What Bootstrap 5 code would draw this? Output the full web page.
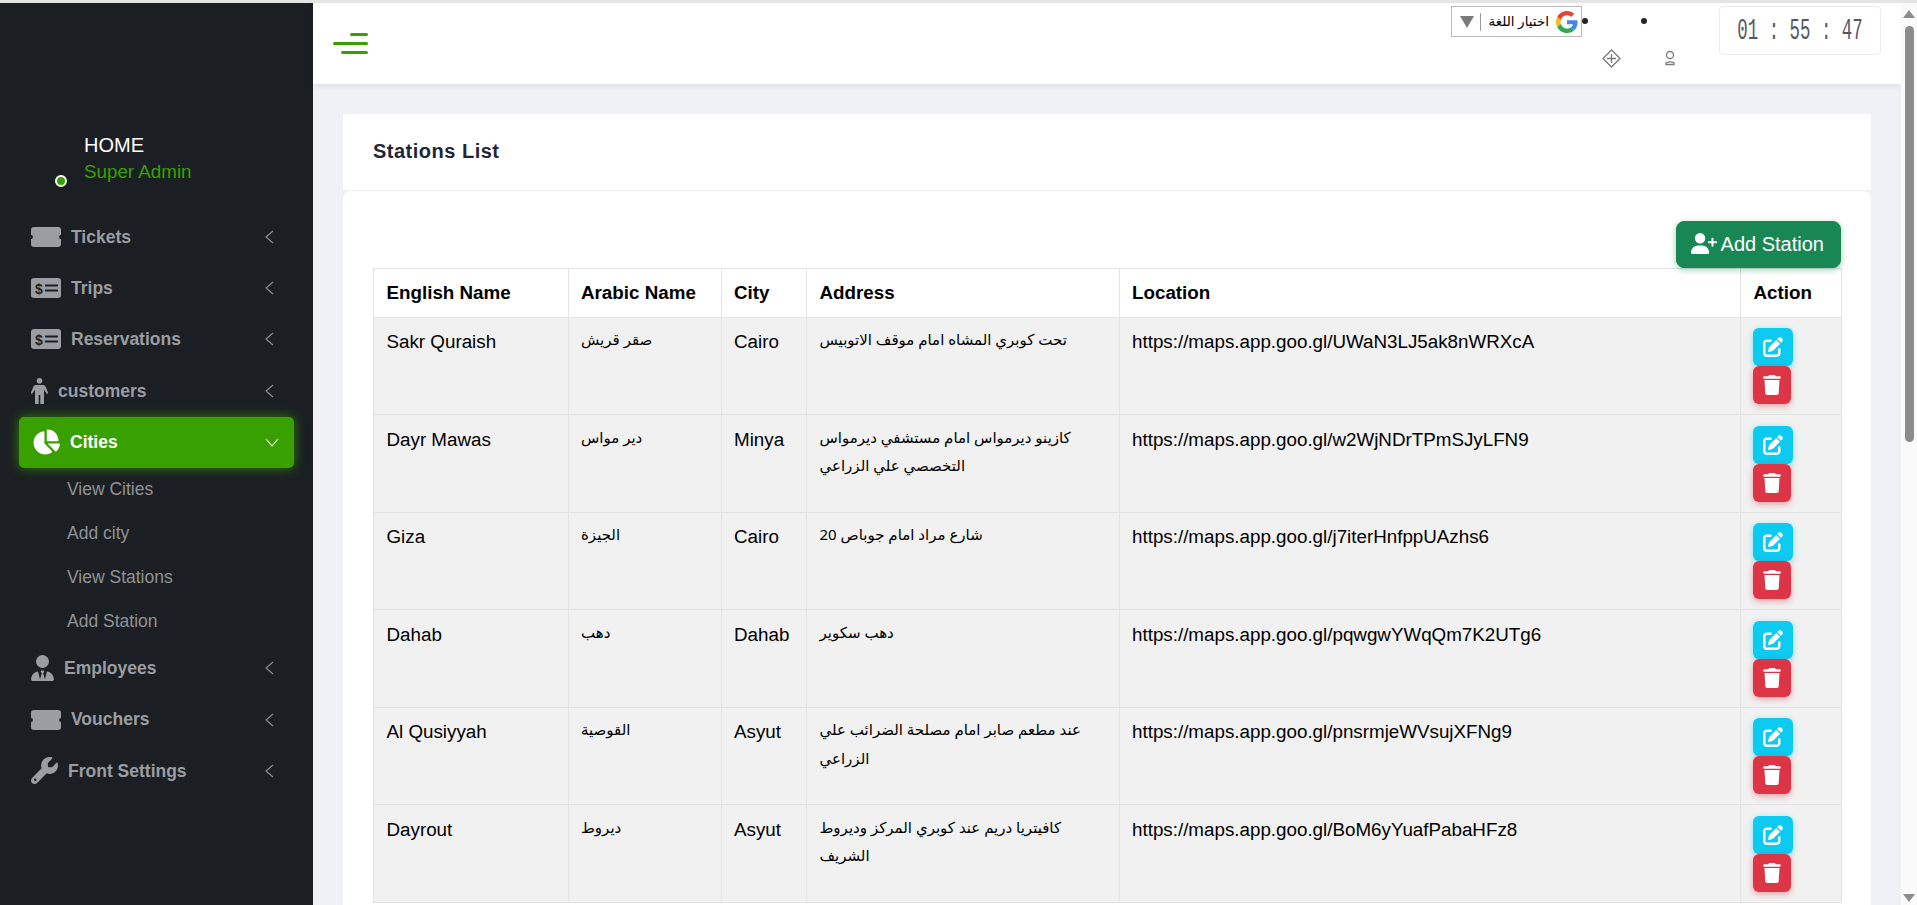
<!DOCTYPE html>
<html lang="en">
<head>
    <meta charset="UTF-8">
    <meta name="viewport" content="width=device-width, initial-scale=1.0">
    <title>Stations List</title>
    <link rel="stylesheet" href="https://cdn.jsdelivr.net/npm/bootstrap@5.3.0/dist/css/bootstrap.min.css">
    <style>
        html, body {
            height: 905px;
            overflow: hidden;
        }

        body {
            background-color: #e4e4e4;
            padding-top: 3px;
            font-family: "Liberation Sans", "DejaVu Sans", sans-serif;
            font-size: 19px;
            color: #000;
        }

        .app-shell {
            height: 902px;
            overflow: hidden;
        }

        /* sidebar */
        .side-bar {
            width: 313px;
            background-color: #1b1f23;
            flex-shrink: 0;
        }

        .side-profile {
            height: 208px;
            padding-left: 61px;
            padding-top: 129px;
        }

        .online-dot {
            width: 12px;
            height: 12px;
            border-radius: 50%;
            background-color: #38a000;
            border: 2px solid #fff;
            margin-top: 43px;
            margin-right: 17px;
            margin-left: -6px;
        }

        .side-home {
            color: #fff;
            font-size: 20px;
            line-height: 27px;
        }

        .side-role {
            color: #38a000;
            font-size: 18.8px;
            line-height: 26px;
        }

        .side-item {
            height: 51.4px;
            padding-left: 31px;
            padding-right: 39px;
            color: #9a9da1;
            font-size: 17.5px;
            font-weight: 700;
        }

        .side-item svg.side-ico {
            fill: #9a9da1;
            flex-shrink: 0;
            margin-right: 10px;
        }

        .side-item .side-label {
            flex-grow: 1;
        }

        .side-chevron {
            fill: none;
            stroke: #8d9094;
            stroke-width: 1.1;
            flex-shrink: 0;
        }

        .side-active {
            margin-left: 19px;
            margin-right: 19px;
            padding-left: 13px;
            padding-right: 15px;
            background-color: #38a000;
            color: #fff;
            border-radius: 5px;
            box-shadow: 0 0 12px rgba(56, 160, 0, 0.75);
            position: relative;
        }

        .side-active svg.side-ico {
            fill: #fff;
        }

        .side-active .side-chevron {
            stroke: #fff;
        }

        .side-sub {
            margin-top: -1px;
            margin-bottom: 0;
            padding-left: 67px;
            list-style: none;
        }

        .side-sub li {
            height: 43.9px;
            line-height: 44px;
            color: #8f9296;
            font-size: 17.5px;
        }

        /* top header */
        .top-head {
            height: 81px;
            background-color: #fff;
            box-shadow: 0 2px 6px rgba(0, 0, 0, 0.08);
            position: relative;
            z-index: 2;
        }

        .burger-btn {
            width: 35px;
            margin-left: 20px;
            margin-top: 30px;
        }

        .burger-btn span {
            display: block;
            height: 3px;
            border-radius: 2px;
            background-color: #38a000;
            margin-left: auto;
            margin-bottom: 6px;
        }

        .burger-btn .bar-a { width: 18px; }
        .burger-btn .bar-b { width: 35px; }
        .burger-btn .bar-c { width: 27px; }

        .lang-box {
            width: 131px;
            height: 31px;
            border: 1px solid #b9b9b9;
            margin-top: 3px;
            padding-left: 8px;
            padding-right: 3px;
            background-color: #fff;
        }

        .lang-arrow {
            width: 0;
            height: 0;
            border-left: 7px solid transparent;
            border-right: 7px solid transparent;
            border-top: 12px solid #7b7b7b;
        }

        .lang-sep {
            width: 1px;
            height: 18px;
            background-color: #9a9a9a;
            margin-left: 6px;
            margin-right: 6px;
        }

        .lang-text {
            font-family: "Noto Sans", "DejaVu Sans", sans-serif;
            font-size: 13.5px;
            white-space: nowrap;
            line-height: 1;
            margin-right: 7px;
        }

        .head-tools {
            width: 137px;
        }

        .tool-dot {
            position: absolute;
            top: 15px;
            width: 6px;
            height: 6px;
            border-radius: 50%;
            background-color: #23262f;
        }

        .tool-dot.dot-a { left: 0; }
        .tool-dot.dot-b { left: 59px; }

        .tool-ico {
            position: absolute;
            fill: none;
            stroke: #7a7a7a;
        }

        .tool-ico.ico-a { left: 20px; top: 46px; }
        .tool-ico.ico-b { left: 82px; top: 47px; }

        .clock-box {
            width: 162px;
            height: 49px;
            border: 1px solid #ececec;
            border-radius: 4px;
            margin-top: 3px;
            margin-right: 20px;
            overflow: hidden;
            text-align: center;
        }

        .clock-text {
            display: inline-block;
            font-family: "Liberation Mono", "DejaVu Sans Mono", monospace;
            font-size: 30px;
            line-height: 49px;
            color: #555864;
            white-space: nowrap;
            transform: scaleX(0.58);
            transform-origin: center;
            margin: 0 -40px;
        }

        /* content */
        .page-area {
            background-color: #f0f1f6;
            min-width: 0;
        }

        .page-body {
            padding: 30px 30px 0 30px;
            overflow: hidden;
        }

        .list-head {
            background-color: #fff;
            height: 76px;
            line-height: 74px;
            padding-left: 30px;
            font-size: 20px;
            font-weight: 700;
            letter-spacing: 0.5px;
            color: #212636;
            margin-bottom: 1px;
        }

        .list-card {
            background-color: #fff;
            border: 0;
            border-radius: 8px 8px 0 0;
            padding: 30px;
            height: 900px;
        }

        .add-btn {
            font-size: 20px;
            border-radius: 8px;
            padding: 7px 16px 8px 14px;
            box-shadow: 0 2px 6px rgba(25, 135, 84, 0.4);
            position: relative;
            z-index: 1;
        }

        .add-btn svg {
            fill: #fff;
            vertical-align: -3px;
            margin-right: 4px;
        }

        .add-row {
            height: 47px;
        }

        .station-table {
            table-layout: fixed;
            width: 1468px;
            margin: 0;
            font-size: 18.8px;
            line-height: 28.5px;
            --bs-table-border-color: #e3e3e3;
        }

        .station-table th,
        .station-table td {
            padding: 10.25px 12.5px;
            color: #000;
        }

        .station-table th {
            padding-top: 9.7px;
            padding-bottom: 9.7px;
        }

        .station-table tbody td {
            background-color: #f1f1f1;
        }

        .station-table tbody td:last-child {
            padding-left: 12px;
        }

        .col-en { width: 194.5px; }
        .col-ar { width: 153px; }
        .col-city { width: 85.5px; }
        .col-addr { width: 312.5px; }
        .col-loc { width: 621.5px; }
        .col-act { width: 101px; }

        .ar-text {
            font-family: "Noto Sans", "DejaVu Sans", sans-serif;
            font-size: 15px;
            line-height: 15px;
            vertical-align: 3px;
        }

        .act-btn {
            width: 38px;
            height: 38px;
            padding: 0;
            border: 0;
            border-radius: 6px;
            display: flex;
            align-items: center;
            justify-content: center;
        }

        .act-btn svg {
            fill: #fff;
        }

        .act-edit {
            width: 40px;
            background-color: #0dcaf0;
            box-shadow: 0 2px 6px rgba(13, 202, 240, 0.45);
        }

        .act-del {
            background-color: #dc3545;
            box-shadow: 0 2px 6px rgba(220, 53, 69, 0.45);
        }

        /* scrollbar */
        .fake-scroll {
            width: 16px;
            background-color: #fafafa;
            flex-shrink: 0;
            position: relative;
            z-index: 3;
        }

        .scroll-up,
        .scroll-down {
            position: absolute;
            left: 2px;
            width: 0;
            height: 0;
            border-left: 6px solid transparent;
            border-right: 6px solid transparent;
        }

        .scroll-up {
            top: 7px;
            border-bottom: 8px solid #8b8b8b;
        }

        .scroll-down {
            bottom: 3px;
            border-top: 8px solid #8b8b8b;
        }

        .scroll-thumb {
            position: absolute;
            left: 4px;
            top: 23px;
            width: 9px;
            height: 416px;
            border-radius: 5px;
            background-color: #8b8b8b;
        }
    </style>
</head>
<body>
    <div class="app-shell d-flex">

        <!-- sidebar -->
        <aside class="side-bar">
            <div class="side-profile d-flex">
                <span class="online-dot"></span>
                <div>
                    <div class="side-home">HOME</div>
                    <div class="side-role">Super Admin</div>
                </div>
            </div>

            <div class="side-item d-flex align-items-center">
                <svg class="side-ico" width="30" height="20" viewBox="0 0 30 20"><path d="M3 0h24a3 3 0 0 1 3 3v5a2 2 0 0 0 0 4v5a3 3 0 0 1-3 3H3a3 3 0 0 1-3-3v-5a2 2 0 0 0 0-4V3a3 3 0 0 1 3-3z"/></svg>
                <span class="side-label">Tickets</span>
                <svg class="side-chevron" width="9" height="14" viewBox="0 0 9 14"><path d="M8 1L1 7l7 6"/></svg>
            </div>
            <div class="side-item d-flex align-items-center">
                <svg class="side-ico" width="30" height="20" viewBox="0 0 30 20"><rect width="30" height="20" rx="3"/><text x="4" y="16" font-size="14" font-weight="700" font-family="Liberation Sans" fill="#1b1f23">$</text><rect x="14" y="6.500" width="13" height="2" fill="#1b1f23"/><rect x="14" y="11.500" width="13" height="2" fill="#1b1f23"/></svg>
                <span class="side-label">Trips</span>
                <svg class="side-chevron" width="9" height="14" viewBox="0 0 9 14"><path d="M8 1L1 7l7 6"/></svg>
            </div>
            <div class="side-item d-flex align-items-center">
                <svg class="side-ico" width="30" height="20" viewBox="0 0 30 20"><rect width="30" height="20" rx="3"/><text x="4" y="16" font-size="14" font-weight="700" font-family="Liberation Sans" fill="#1b1f23">$</text><rect x="14" y="6.500" width="13" height="2" fill="#1b1f23"/><rect x="14" y="11.500" width="13" height="2" fill="#1b1f23"/></svg>
                <span class="side-label">Reservations</span>
                <svg class="side-chevron" width="9" height="14" viewBox="0 0 9 14"><path d="M8 1L1 7l7 6"/></svg>
            </div>
            <div class="side-item d-flex align-items-center">
                <svg class="side-ico" width="17" height="26" viewBox="0 0 17 26"><circle cx="8.500" cy="2.800" r="2.800"/><path d="M5 7h7c1.200 0 2 .5 2.600 1.600L17 14.500c.4 1-1 1.700-1.600.8L13 11.500V26H9.300V17H7.700v9H4V11.500L1.600 15.300c-.6.900-2 .2-1.600-.8L2.400 8.600C3 7.500 3.800 7 5 7z"/></svg>
                <span class="side-label">customers</span>
                <svg class="side-chevron" width="9" height="14" viewBox="0 0 9 14"><path d="M8 1L1 7l7 6"/></svg>
            </div>
            <div class="side-item side-active d-flex align-items-center">
                <svg class="side-ico" width="28" height="26" viewBox="0 0 576 512"><path d="M304 240V16.600c0-9 7-16.600 16-16.600C443.700 0 544 100.300 544 224c0 9-7.600 16-16.600 16H304zM32 272C32 150.700 122.100 50.300 239 34.300c9.200-1.300 17 6.100 17 15.400V288L412.500 444.500c6.700 6.700 6.200 17.700-1.500 23.100C371.800 495.600 323.800 512 272 512C139.500 512 32 404.600 32 272zm526.400 16c9.300 0 16.600 7.800 15.400 17c-7.700 55.900-34.600 105.600-73.900 142.300c-6 5.600-15.400 5.200-21.200-.7L320 288H558.400z"/></svg>
                <span class="side-label">Cities</span>
                <svg class="side-chevron" width="14" height="9" viewBox="0 0 14 9"><path d="M1 1l6 7 6-7"/></svg>
            </div>
            <ul class="side-sub">
                <li>View Cities</li>
                <li>Add city</li>
                <li>View Stations</li>
                <li>Add Station</li>
            </ul>
            <div class="side-item d-flex align-items-center">
                <svg class="side-ico" width="23" height="26" viewBox="0 0 448 512"><path d="M96 128a128 128 0 1 0 256 0A128 128 0 1 0 96 128zm94.500 200.200l18.600 31L175.800 483.100l-36-146.900c-2-8.100-9.800-13.400-17.900-11.300C51.900 342.400 0 405.800 0 481.300c0 17 13.800 30.700 30.700 30.700H162.500c0 0 0 0 .1 0H168 280h5.500c0 0 0 0 .1 0H417.300c17 0 30.700-13.800 30.700-30.700c0-75.500-51.900-138.900-121.900-156.400c-8.100-2-15.900 3.300-17.900 11.300l-36 146.900L238.900 359.200l18.600-31c6.400-10.700-1.300-24.200-13.700-24.200H224 204.300c-12.400 0-20.100 13.600-13.700 24.200z"/></svg>
                <span class="side-label">Employees</span>
                <svg class="side-chevron" width="9" height="14" viewBox="0 0 9 14"><path d="M8 1L1 7l7 6"/></svg>
            </div>
            <div class="side-item d-flex align-items-center">
                <svg class="side-ico" width="30" height="20" viewBox="0 0 30 20"><path d="M3 0h24a3 3 0 0 1 3 3v5a2 2 0 0 0 0 4v5a3 3 0 0 1-3 3H3a3 3 0 0 1-3-3v-5a2 2 0 0 0 0-4V3a3 3 0 0 1 3-3z"/></svg>
                <span class="side-label">Vouchers</span>
                <svg class="side-chevron" width="9" height="14" viewBox="0 0 9 14"><path d="M8 1L1 7l7 6"/></svg>
            </div>
            <div class="side-item d-flex align-items-center">
                <svg class="side-ico" width="27" height="27" viewBox="0 0 512 512"><path d="M352 320c88.400 0 160-71.600 160-160c0-15.300-2.200-30.100-6.200-44.200c-3.100-10.800-16.400-13.200-24.300-5.300l-76.800 76.800c-3 3-7.100 4.700-11.300 4.700H336c-8.800 0-16-7.200-16-16V118.600c0-4.200 1.700-8.300 4.700-11.300l76.800-76.800c7.900-7.900 5.400-21.200-5.300-24.300C382.100 2.200 367.300 0 352 0C263.600 0 192 71.600 192 160c0 19.100 3.400 37.500 9.500 54.500L19.900 396.100C7.200 408.800 0 426.100 0 444.100C0 481.600 30.400 512 67.900 512c18 0 35.300-7.200 48-19.900L297.500 310.500c17 6.200 35.400 9.500 54.500 9.500zM80 408a24 24 0 1 1 0 48 24 24 0 1 1 0-48z"/></svg>
                <span class="side-label">Front Settings</span>
                <svg class="side-chevron" width="9" height="14" viewBox="0 0 9 14"><path d="M8 1L1 7l7 6"/></svg>
            </div>
        </aside>

        <!-- main -->
        <main class="page-area flex-grow-1 d-flex flex-column">
            <header class="top-head d-flex justify-content-between flex-shrink-0">
                <div class="burger-btn">
                    <span class="bar-a"></span>
                    <span class="bar-b"></span>
                    <span class="bar-c"></span>
                </div>
                <div class="d-flex">
                    <div class="lang-box d-flex align-items-center">
                        <span class="lang-arrow"></span>
                        <span class="lang-sep"></span>
                        <span class="lang-text flex-grow-1 text-end" lang="ar">اختيار اللغة</span>
                        <svg width="22" height="22" viewBox="0 0 48 48">
                            <path fill="#EA4335" d="M24 9.500c3.540 0 6.710 1.220 9.210 3.600l6.850-6.850C35.900 2.380 30.470 0 24 0 14.620 0 6.510 5.380 2.560 13.220l7.980 6.190C12.430 13.720 17.740 9.500 24 9.500z"/>
                            <path fill="#4285F4" d="M46.980 24.550c0-1.570-.15-3.090-.38-4.550H24v9.020h12.940c-.58 2.960-2.260 5.480-4.780 7.180l7.730 6c4.510-4.180 7.090-10.360 7.090-17.650z"/>
                            <path fill="#FBBC05" d="M10.530 28.590c-.48-1.450-.76-2.990-.76-4.590s.27-3.140.76-4.590l-7.980-6.190C.92 16.460 0 20.120 0 24c0 3.880.92 7.540 2.560 10.780l7.970-6.190z"/>
                            <path fill="#34A853" d="M24 48c6.480 0 11.930-2.130 15.890-5.810l-7.730-6c-2.150 1.450-4.920 2.300-8.160 2.300-6.260 0-11.570-4.220-13.470-9.910l-7.980 6.190C6.510 42.620 14.620 48 24 48z"/>
                        </svg>
                    </div>
                    <div class="head-tools position-relative">
                        <span class="tool-dot dot-a"></span>
                        <span class="tool-dot dot-b"></span>
                        <svg class="tool-ico ico-a" width="19" height="19" viewBox="0 0 19 19"><path stroke-width="1.300" d="M9.500 1L18 9.500 9.500 18 1 9.500zM9.500 5v9M5 9.500h9"/></svg>
                        <svg class="tool-ico ico-b" width="12" height="16" viewBox="0 0 12 16"><circle stroke-width="1.300" cx="6" cy="5" r="3.500"/><path stroke-width="1.300" d="M2 13c0-1.500 8-1.500 8 0v1.500H2z"/></svg>
                    </div>
                    <div class="clock-box"><span class="clock-text">01 : 55 : 47</span></div>
                </div>
            </header>

            <div class="page-body flex-grow-1">
                <div class="list-head">Stations List</div>
                <div class="card list-card">
                    <div class="add-row d-flex justify-content-end">
                        <button type="button" class="btn btn-success btn-lg add-btn">
                            <svg width="26" height="21" viewBox="0 0 640 512"><path d="M96 128a128 128 0 1 1 256 0A128 128 0 1 1 96 128zM0 482.300C0 383.800 79.800 304 178.300 304h91.400C368.200 304 448 383.800 448 482.300c0 16.400-13.300 29.700-29.700 29.700H29.700C13.300 512 0 498.700 0 482.300zM504 312V248H440c-13.300 0-24-10.700-24-24s10.700-24 24-24h64V136c0-13.300 10.700-24 24-24s24 10.700 24 24v64h64c13.300 0 24 10.700 24 24s-10.700 24-24 24H552v64c0 13.300-10.700 24-24 24s-24-10.700-24-24z"/></svg>Add Station
                        </button>
                    </div>
                    <table class="table table-bordered station-table">
                        <thead>
                            <tr>
                                <th class="col-en">English Name</th>
                                <th class="col-ar">Arabic Name</th>
                                <th class="col-city">City</th>
                                <th class="col-addr">Address</th>
                                <th class="col-loc">Location</th>
                                <th class="col-act">Action</th>
                            </tr>
                        </thead>
                        <tbody id="stationRows"></tbody>
                    </table>
                </div>
            </div>
        </main>

        <div class="fake-scroll">
            <span class="scroll-up"></span>
            <span class="scroll-thumb"></span>
            <span class="scroll-down"></span>
        </div>
    </div>

    <script>
        // station rows
        const stations = [
            ['Sakr Quraish', 'صقر قريش', 'Cairo', 'تحت كوبري المشاه امام موقف الاتوبيس', 'https://maps.app.goo.gl/UWaN3LJ5ak8nWRXcA'],
            ['Dayr Mawas', 'دير مواس', 'Minya', 'كازينو ديرمواس امام مستشفي ديرمواس التخصصي علي الزراعي', 'https://maps.app.goo.gl/w2WjNDrTPmSJyLFN9'],
            ['Giza', 'الجيزة', 'Cairo', 'شارع مراد امام جوباص 20', 'https://maps.app.goo.gl/j7iterHnfppUAzhs6'],
            ['Dahab', 'دهب', 'Dahab', 'دهب سكوير', 'https://maps.app.goo.gl/pqwgwYWqQm7K2UTg6'],
            ['Al Qusiyyah', 'القوصية', 'Asyut', 'عند مطعم صابر امام مصلحة الضرائب علي الزراعي', 'https://maps.app.goo.gl/pnsrmjeWVsujXFNg9'],
            ['Dayrout', 'ديروط', 'Asyut', 'كافيتريا دريم عند كوبري المركز وديروط الشريف', 'https://maps.app.goo.gl/BoM6yYuafPabaHFz8']
        ];

        const editIcon = '<svg width="20" height="20" viewBox="0 0 512 512"><path d="M471.6 21.7c-21.9-21.9-57.3-21.9-79.2 0L362.3 51.7l97.9 97.9 30.1-30.1c21.9-21.9 21.9-57.3 0-79.2L471.6 21.7zm-299.2 220c-6.1 6.1-10.8 13.6-13.5 21.9l-29.6 88.8c-2.9 8.6-.6 18.1 5.8 24.6s15.9 8.7 24.6 5.8l88.8-29.6c8.2-2.7 15.7-7.4 21.9-13.5L437.7 172.3 339.7 74.3 172.4 241.7zM96 64C43 64 0 107 0 160V416c0 53 43 96 96 96H352c53 0 96-43 96-96V320c0-17.7-14.3-32-32-32s-32 14.3-32 32v96c0 17.7-14.3 32-32 32H96c-17.7 0-32-14.3-32-32V160c0-17.7 14.3-32 32-32h96c17.7 0 32-14.3 32-32s-14.3-32-32-32H96z"/></svg>';
        const trashIcon = '<svg width="18" height="20" viewBox="0 0 448 512"><path d="M135.2 17.7L128 32H32C14.3 32 0 46.3 0 64S14.3 96 32 96H416c17.7 0 32-14.3 32-32s-14.3-32-32-32H320l-7.2-14.3C307.4 6.8 296.3 0 284.2 0H163.8c-12.1 0-23.2 6.8-28.6 17.7zM416 128H32L53.2 467c1.6 25.3 22.6 45 47.9 45H346.9c25.3 0 46.3-19.7 47.9-45L416 128z"/></svg>';

        document.getElementById('stationRows').innerHTML = stations.map(s => `
            <tr>
                <td>${s[0]}</td>
                <td><span class="ar-text" lang="ar">${s[1]}</span></td>
                <td>${s[2]}</td>
                <td><span class="ar-text" lang="ar">${s[3]}</span></td>
                <td>${s[4]}</td>
                <td>
                    <button type="button" class="btn act-btn act-edit">${editIcon}</button>
                    <button type="button" class="btn act-btn act-del">${trashIcon}</button>
                </td>
            </tr>`).join('');
    </script>
    <script src="https://cdn.jsdelivr.net/npm/bootstrap@5.3.0/dist/js/bootstrap.bundle.min.js"></script>
</body>
</html>
